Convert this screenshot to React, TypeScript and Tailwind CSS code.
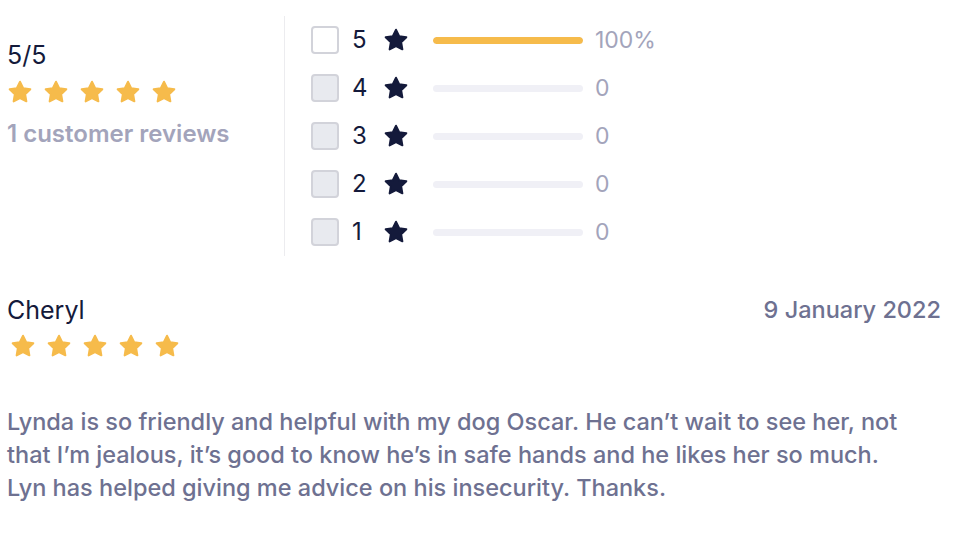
const Star = ({ className }: { className: string }) => (
  <svg viewBox="0 0 24 24" className={className} fill="currentColor" stroke="currentColor" strokeWidth="1.8" strokeLinejoin="round">
    <path d="M12 2.5l2.95 5.98 6.6.96-4.78 4.65 1.13 6.57L12 17.56l-5.9 3.1 1.13-6.57-4.78-4.65 6.6-.96L12 2.5z" />
  </svg>
)

const rows = [
  { n: 5, pct: 100, label: "100%" },
  { n: 4, pct: 0, label: "0" },
  { n: 3, pct: 0, label: "0" },
  { n: 2, pct: 0, label: "0" },
  { n: 1, pct: 0, label: "0" },
]

export default function App() {
  return (
    <div className="w-[958px] h-[534px] bg-white font-['Inter',sans-serif] overflow-hidden">
      <div className="flex pt-4">
        <div className="w-[284px] pl-[7px] pt-[24px]">
          <div className="text-[25px] leading-[30px] text-[#141a3b]">5/5</div>
          <div className="flex gap-[10px] mt-[9px]">
            {[0, 1, 2, 3, 4].map((i) => (
              <Star key={i} className="w-[26px] h-[26px] text-[#f6bb4b]" />
            ))}
          </div>
          <div className="mt-[14px] text-[24px] leading-[30px] font-semibold text-[#a3a4bb]">1 customer reviews</div>
        </div>
        <div className="border-l border-[#ececef] pl-[26px]">
          {rows.map((r) => (
            <div key={r.n} className="h-12 flex items-center">
              <div
                className={`w-[28px] h-[28px] rounded-[4px] border-2 border-[#d2d3da] ${r.n === 5 ? "bg-white" : "bg-[#e8eaef]"}`}
              ></div>
              <span className="ml-[13px] w-[20px] text-[24px] leading-none text-[#141a3b]">{r.n}</span>
              <Star className="ml-[11px] w-[26px] h-[26px] text-[#141a3b]" />
              <div className="ml-[24px] w-[150px] h-[7px] rounded-full bg-[#f0f0f6] overflow-hidden">
                <div className="h-full rounded-full bg-[#f6bb4b]" style={{ width: `${r.pct}%` }}></div>
              </div>
              <span className="ml-[12px] text-[23px] leading-none text-[#a3a4bb]">{r.label}</span>
            </div>
          ))}
        </div>
      </div>
      <div className="pl-[7px] pr-[17px] mt-[39px]">
        <div className="flex justify-between items-center">
          <span className="text-[25px] leading-[30px] text-[#141a3b]">Cheryl</span>
          <span className="text-[23.5px] leading-[30px] font-medium text-[#6e7191]">9 January 2022</span>
        </div>
        <div className="flex gap-[10px] mt-[8px] pl-[3px]">
          {[0, 1, 2, 3, 4].map((i) => (
            <Star key={i} className="w-[26px] h-[26px] text-[#f6bb4b]" />
          ))}
        </div>
        <p className="mt-[46px] text-[23.5px] leading-[33px] font-medium text-[#6e7191] max-w-[910px]">
          Lynda is so friendly and helpful with my dog Oscar. He can’t wait to see her, not that I’m jealous, it’s good to know he’s in safe hands and he likes her so much. Lyn has helped giving me advice on his insecurity. Thanks.
        </p>
      </div>
    </div>
  )
}
